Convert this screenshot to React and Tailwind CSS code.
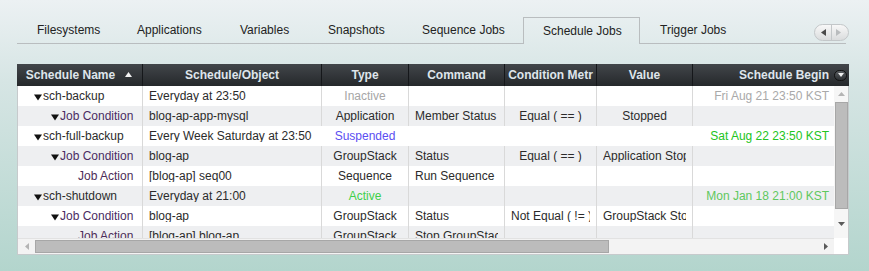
import React from 'react';

const tabs = [
  { label: 'Filesystems', w: 'w-[100px]' },
  { label: 'Applications', w: 'w-[103px]' },
  { label: 'Variables', w: 'w-[88px]' },
  { label: 'Snapshots', w: 'w-[94px]' },
  { label: 'Sequence Jobs', w: 'w-[121px]' },
  { label: 'Schedule Jobs', w: 'w-[117px]', active: true },
  { label: 'Trigger Jobs', w: 'w-[110px]' },
];

const columns = [
  { label: 'Schedule Name', w: 'w-[126px]', sort: true },
  { label: 'Schedule/Object', w: 'w-[179px]' },
  { label: 'Type', w: 'w-[87px]' },
  { label: 'Command', w: 'w-[96px]' },
  { label: 'Condition Metr', w: 'w-[92px]' },
  { label: 'Value', w: 'w-[96px]' },
  { label: 'Schedule Begin', w: 'w-[141px]', right: true },
];

const rows = [
  { level: 1, name: 'sch-backup', obj: 'Everyday at 23:50', type: 'Inactive', typeCls: 'text-[#a6a6a6]', begin: 'Fri Aug 21 23:50 KST', beginCls: 'text-[#a9a9a9]' },
  { level: 2, name: 'Job Condition', obj: 'blog-ap-app-mysql', type: 'Application', cmd: 'Member Status', cond: 'Equal ( == )', val: 'Stopped' },
  { level: 1, name: 'sch-full-backup', obj: 'Every Week Saturday at 23:50', type: 'Suspended', typeCls: 'text-[#5b4ef2]', begin: 'Sat Aug 22 23:50 KST', beginCls: 'text-[#22c422]', plain: true },
  { level: 2, name: 'Job Condition', obj: 'blog-ap', type: 'GroupStack', cmd: 'Status', cond: 'Equal ( == )', val: 'Application Stopped' },
  { level: 3, name: 'Job Action', obj: '[blog-ap] seq00', type: 'Sequence', cmd: 'Run Sequence' },
  { level: 1, name: 'sch-shutdown', obj: 'Everyday at 21:00', type: 'Active', typeCls: 'text-[#3fd04a]', begin: 'Mon Jan 18 21:00 KST', beginCls: 'text-[#5ec85e]' },
  { level: 2, name: 'Job Condition', obj: 'blog-ap', type: 'GroupStack', cmd: 'Status', cond: 'Not Equal ( != )', val: 'GroupStack Stopped' },
  { level: 3, name: 'Job Action', obj: '[blog-ap] blog-ap', type: 'GroupStack', cmd: 'Stop GroupStack' },
];

function Caret() {
  return (
    <svg width="8" height="7" viewBox="0 0 8 7" className="mr-[1px] mt-[3px] shrink-0">
      <path d="M0 0.5 L8 0.5 L4 6.5 Z" fill="#111" />
    </svg>
  );
}

function NameCell({ row }) {
  if (row.level === 3) {
    return <div className="flex h-full items-center pl-[60px] text-[#4d2d58]">{row.name}</div>;
  }
  const pad = row.level === 1 ? 'pl-[16px] text-[#2b2b2b]' : 'pl-[33px] text-[#4a2c63]';
  return (
    <div className={`flex h-full items-center ${pad}`}>
      <Caret />
      <span>{row.name}</span>
    </div>
  );
}

function Cell({ w, line, align, children, cls = '' }) {
  const a = align === 'center' ? 'text-center' : align === 'right' ? 'text-right' : 'text-left';
  return (
    <div className={`${w} h-full shrink-0 px-[6px] flex items-center ${line ? 'border-r border-[#d9d9d9]' : 'border-r border-transparent'}`}>
      <div className={`w-full overflow-hidden whitespace-nowrap ${a} ${cls}`}>{children}</div>
    </div>
  );
}

function Row({ row, i }) {
  const bg = i % 2 === 0 ? 'bg-white' : 'bg-[#eeeff1]';
  const line = !row.plain;
  return (
    <div className={`flex h-[20px] shrink-0 ${bg}`}>
      <div className="w-[125px] h-full shrink-0 border-r border-[#d9d9d9]">
        <NameCell row={row} />
      </div>
      <Cell w="w-[179px]" line={line} cls="text-[#2b2b2b]">{row.obj}</Cell>
      <Cell w="w-[87px]" line={line} align="center" cls={row.typeCls || 'text-[#2b2b2b]'}>{row.type}</Cell>
      <Cell w="w-[96px]" line={line} cls="text-[#2b2b2b]">{row.cmd}</Cell>
      <Cell w="w-[92px]" line={line} align="center" cls="text-[#2b2b2b]">{row.cond}</Cell>
      <Cell w="w-[96px]" line={line} align="center" cls="text-[#2b2b2b]">{row.val}</Cell>
      <div className="w-[141px] h-full shrink-0 pr-[5px] flex items-center justify-end">
        <span className={`whitespace-nowrap ${row.beginCls || ''}`}>{row.begin}</span>
      </div>
    </div>
  );
}

function TabScroller() {
  return (
    <div className="flex h-[17px] w-[35px] -mr-[3px] rounded-full border border-[#c3c7c9] bg-[linear-gradient(#f8f8f8,#dadcdd)] overflow-hidden">
      <div className="flex w-1/2 items-center justify-center border-r border-[#c3c7c9] pl-[2px]">
        <svg width="5" height="7" viewBox="0 0 5 7"><path d="M5 0 L0 3.5 L5 7 Z" fill="#4a4a4a" /></svg>
      </div>
      <div className="flex w-1/2 items-center justify-center pr-[2px]">
        <svg width="5" height="7" viewBox="0 0 5 7"><path d="M0 0 L5 3.5 L0 7 Z" fill="#b9bcbe" /></svg>
      </div>
    </div>
  );
}

export default function App() {
  return (
    <div className="w-[869px] h-[271px] overflow-hidden bg-[linear-gradient(180deg,#ecf1f3_0%,#d6e5e4_30%,#b3d5cd_100%)] pl-[17px] pt-[17px] font-['Liberation_Sans',Arial,sans-serif] text-[12px] leading-none">
      {/* tab strip */}
      <div className="flex w-[829px] h-[27px]">
        {tabs.map((t) =>
          t.active ? (
            <div key={t.label} className={`${t.w} shrink-0 flex items-center pl-[19px] border-l border-t border-r border-[#b9bdbf] text-[#222]`}>
              {t.label}
            </div>
          ) : (
            <div key={t.label} className={`${t.w} shrink-0 flex items-center pl-[20px] border-b border-[#b9bdbf] text-[#222]`}>
              {t.label}
            </div>
          )
        )}
        <div className="flex-1 flex items-start justify-end pt-[7px] border-b border-[#b9bdbf]">
          <TabScroller />
        </div>
      </div>

      {/* grid */}
      <div className="mt-[20px] w-[832px]">
        <div className="flex h-[22px] bg-[linear-gradient(#42464a,#25282b)] text-[#dfe5eb] font-bold">
          {columns.map((c, idx) => (
            <div
              key={c.label}
              className={`${c.w} shrink-0 h-full flex items-center overflow-hidden whitespace-nowrap ${idx < columns.length - 1 ? 'border-r border-[#15171a]' : ''} ${c.right ? 'justify-end pr-[5px]' : 'justify-center'} ${c.sort ? 'relative pr-[18px]' : ''}`}
            >
              {c.label}
              {c.sort && (
                <svg width="7" height="5" viewBox="0 0 7 5" className="absolute right-[10px] top-[8px]">
                  <path d="M0 5 L3.5 0 L7 5 Z" fill="#f2f2f2" />
                </svg>
              )}
            </div>
          ))}
          <div className="w-[15px] shrink-0 h-full flex items-center">
            <div className="w-[13px] h-[11px] rounded-full bg-[linear-gradient(#5b5f63,#2b2e31)] border border-[#111] flex items-center justify-center">
              <svg width="6" height="4" viewBox="0 0 6 4"><path d="M0 0 L6 0 L3 4 Z" fill="#f0f0f0" /></svg>
            </div>
          </div>
        </div>

        <div className="flex border-l border-r border-b border-[#c6cacc] bg-white">
          <div className="w-[816px] shrink-0">
            <div className="h-[152px] overflow-hidden flex flex-col">
              {rows.map((r, i) => (
                <Row key={i} row={r} i={i} />
              ))}
            </div>
            {/* horizontal scrollbar */}
            <div className="h-[16px] flex items-center bg-[#f3f3f3] border-t border-[#e2e2e2]">
              <div className="w-[17px] flex justify-center">
                <svg width="4" height="7" viewBox="0 0 4 7"><path d="M4 0 L0 3.5 L4 7 Z" fill="#b4b4b4" /></svg>
              </div>
              <div className="w-[574px] h-[13px] bg-[#bcbcbc] border border-[#a7a7a7]" />
              <div className="flex-1" />
              <div className="w-[17px] flex justify-center">
                <svg width="4" height="7" viewBox="0 0 4 7"><path d="M0 0 L4 3.5 L0 7 Z" fill="#5a5a5a" /></svg>
              </div>
            </div>
          </div>
          {/* vertical scrollbar */}
          <div className="w-[14px] shrink-0 flex flex-col">
            <div className="h-[152px] flex flex-col items-center bg-[#f6f6f6]">
              <div className="h-[16px] flex items-center justify-center">
                <svg width="7" height="4" viewBox="0 0 7 4"><path d="M0 4 L3.5 0 L7 4 Z" fill="#b4b4b4" /></svg>
              </div>
              <div className="w-[13px] h-[107px] bg-[#bcbcbc] border border-[#a7a7a7]" />
              <div className="flex-1 flex items-center justify-center">
                <svg width="7" height="4" viewBox="0 0 7 4"><path d="M0 0 L7 0 L3.5 4 Z" fill="#5a5a5a" /></svg>
              </div>
            </div>
            <div className="flex-1 bg-white" />
          </div>
        </div>
      </div>
    </div>
  );
}
